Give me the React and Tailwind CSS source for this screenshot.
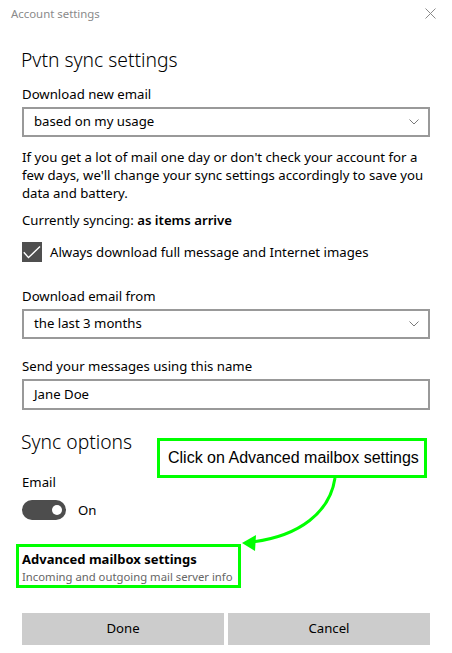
import React from "react";

const ui = { fontFamily: '"Noto Sans", "Open Sans", sans-serif' };

function Chevron() {
  return (
    <svg width="10" height="6" viewBox="0 0 10 6" className="block">
      <path d="M0.5 0.5 L5 5 L9.5 0.5" fill="none" stroke="#7a7a7a" strokeWidth="1" />
    </svg>
  );
}

function Select({ value }) {
  return (
    <div className="mt-[3px] h-[30px] border-2 border-[#999999] flex items-center justify-between pl-[10px] pr-[9px] text-[13.2px] text-black">
      <span>{value}</span>
      <Chevron />
    </div>
  );
}

export default function App() {
  return (
    <div className="relative w-[452px] h-[653px] bg-white overflow-hidden text-black" style={ui}>
      {/* title bar */}
      <div className="h-[27px] flex items-center justify-between pl-[11px] pr-[16px]">
        <span className="text-[11.4px] text-[#8a8a8a]">Account settings</span>
        <svg width="11" height="11" viewBox="0 0 11 11" className="block">
          <path d="M0.5 0.5 L10.5 10.5 M10.5 0.5 L0.5 10.5" stroke="#8a8a8a" strokeWidth="1" />
        </svg>
      </div>

      <div className="px-[22px] flex flex-col">
        <div className="mt-[19px] -ml-[1px] h-[28px] text-[19.3px] leading-[28px] font-light">Pvtn sync settings</div>

        <div className="mt-[10px] text-[13.2px] leading-[20px]">Download new email</div>
        <Select value="based on my usage" />

        <p className="mt-[11px] text-[13.2px] leading-[18px] whitespace-nowrap">
          If you get a lot of mail one day or don't check your account for a<br />
          few days, we'll change your sync settings accordingly to save you<br />
          data and battery.
        </p>

        <div className="mt-[8px] text-[13.2px] leading-[20px]">
          Currently syncing: <span className="font-semibold">as items arrive</span>
        </div>

        <div className="mt-[12px] flex items-center gap-[8px]">
          <div className="w-[20px] h-[20px] bg-[#4f4f4f] flex items-center justify-center">
            <svg width="20" height="20" viewBox="0 0 20 20" className="block">
              <path d="M1.8 10.3 L6.5 15.6 L18 4.6" fill="none" stroke="#ffffff" strokeWidth="1.4" />
            </svg>
          </div>
          <span className="text-[13.2px] leading-[20px]">Always download full message and Internet images</span>
        </div>

        <div className="mt-[24px] text-[13.2px] leading-[20px]">Download email from</div>
        <Select value="the last 3 months" />

        <div className="mt-[17px] text-[13.2px] leading-[20px]">Send your messages using this name</div>
        <div className="mt-[3px] h-[31px] border-2 border-[#999999] flex items-center pl-[10px] text-[13.2px]">Jane Doe</div>

        <div className="mt-[18px] -ml-[1px] h-[28px] text-[19.3px] leading-[28px] font-light">Sync options</div>

        <div className="mt-[16px] text-[13.2px] leading-[20px]">Email</div>
        <div className="mt-[8px] flex items-center gap-[12px]">
          <div className="w-[44px] h-[20px] rounded-full bg-[#4d4d4d] flex items-center justify-end pr-[4px]">
            <div className="w-[10px] h-[10px] rounded-full bg-white" />
          </div>
          <span className="text-[13.2px] leading-[20px]">On</span>
        </div>

        <div className="mt-[24px] -ml-[6px] w-[225px] h-[44px] border-[3px] border-[#00ff00] pl-[3px] pt-[4px]">
          <div className="text-[13px] leading-[17px] font-bold whitespace-nowrap">Advanced mailbox settings</div>
          <div className="text-[11.3px] leading-[17px] text-[#666666] whitespace-nowrap">Incoming and outgoing mail server info</div>
        </div>

        <div className="mt-[25px] flex gap-[4px]">
          <button className="flex-1 h-[32px] bg-[#cccccc] text-[13.2px] text-black">Done</button>
          <button className="flex-1 h-[32px] bg-[#cccccc] text-[13.2px] text-black">Cancel</button>
        </div>
      </div>

      {/* annotation callout */}
      <div
        className="absolute left-[157px] top-[438px] w-[270px] h-[40px] border-[3px] border-[#00ff00] bg-white flex items-center pl-[8px] text-[16px] text-black"
        style={{ fontFamily: '"Liberation Sans", Arial, sans-serif' }}
      >
        Click on Advanced mailbox settings
      </div>

      {/* arrow */}
      <svg className="absolute left-0 top-0 pointer-events-none" width="452" height="653" viewBox="0 0 452 653">
        <path d="M335 478 C 330 512, 300 536, 252 542" fill="none" stroke="#00ff00" strokeWidth="3" />
        <polygon points="242,543 256,535 255,551" fill="#00ff00" />
      </svg>
    </div>
  );
}
